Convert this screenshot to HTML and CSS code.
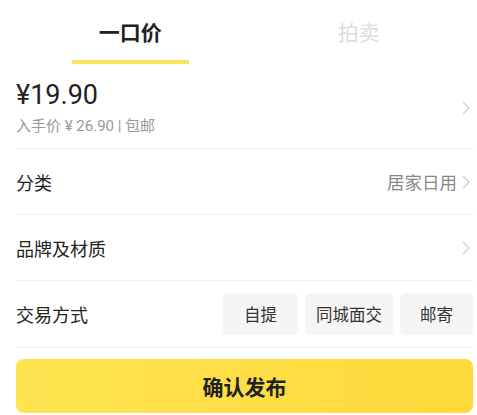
FILE: index.html
```html
<!DOCTYPE html>
<html lang="zh">
<head>
<meta charset="utf-8" />
<title>发布</title>
<link rel="stylesheet" href="styles.css">
</head>
<body>
<div class="page">
  <div class="tabs">
    <div class="tab current">一口价</div>
    <div class="tab">拍卖</div>
  </div>

  <div class="row price-row">
    <div class="price-info">
      <div class="price">¥19.90</div>
      <div class="sub">入手价 ¥ 26.90 | 包邮</div>
    </div>
    <span class="arrow"><svg width="10" height="16" viewBox="0 0 10 16"><path d="M2 2l6 6-6 6" fill="none" stroke="#ccc" stroke-width="1.2"/></svg></span>
  </div>

  <div class="row">
    <span class="label">分类</span>
    <span class="value">居家日用</span>
    <span class="arrow"><svg width="10" height="16" viewBox="0 0 10 16"><path d="M2 2l6 6-6 6" fill="none" stroke="#ccc" stroke-width="1.2"/></svg></span>
  </div>

  <div class="row">
    <span class="label">品牌及材质</span>
    <span class="value"></span>
    <span class="arrow"><svg width="10" height="16" viewBox="0 0 10 16"><path d="M2 2l6 6-6 6" fill="none" stroke="#ccc" stroke-width="1.2"/></svg></span>
  </div>

  <div class="row trade-row">
    <span class="label">交易方式</span>
    <div class="chips">
      <span class="chip w75">自提</span>
      <span class="chip w88">同城面交</span>
      <span class="chip w73">邮寄</span>
    </div>
  </div>

  <div class="btn">确认发布</div>
</div>
</body>
</html>
```

FILE: styles.css
```css
*{ padding:0; margin:0; box-sizing:border-box;}
body{
  background:#fff;
  font-family:"Noto Sans CJK SC","Noto Sans",sans-serif;
  color:#222;
}
.page{ width:477px; padding:0 4px 0 16px;}

.tabs{ display:flex; height:65px;}
.tab{
  flex:1;
  text-align:center;
  font-size:21px;
  line-height:21px;
  padding-top:21px;
  color:#ddd;
  position:relative;
}
.tab.current{ color:#222; font-weight:bold;}
.tab.current:after{
  content:"";
  position:absolute;
  left:56px;
  top:60px;
  width:117px;
  height:4px;
  background:#f9e55a;
}

.row{
  display:flex;
  align-items:center;
  height:66px;
  border-bottom:1px solid #eee;
  font-size:18px;
  color:#222;
}
.row .label{ flex:1;}
.row .value{ color:#888; font-size:17.5px; margin-right:3px;}
.arrow{ width:13px; display:flex; justify-content:flex-end; padding-right:2px;}

.price-row{ height:84px; padding-top:2px;}
.price-info{ flex:1;}
.price{ font-family:"Roboto","Noto Sans",sans-serif; font-size:27px; line-height:30px; color:#222;}
.sub{ font-family:"Roboto","Noto Sans CJK SC",sans-serif; font-size:15px; color:#999; margin-top:7px; line-height:18px;}

.trade-row{ height:67px; border-bottom-color:#f2f2f2;}
.chips{ display:flex; gap:7px;}
.chip{
  height:42px;
  line-height:42px;
  background:#f5f5f5;
  border-radius:5px;
  text-align:center;
  font-size:16.5px;
  color:#333;
}
.w75{ width:75px;}
.w88{ width:88px;}
.w73{ width:73px;}

.btn{
  margin:11px 0 0 0;
  width:457px;
  height:54px;
  line-height:54px;
  border-radius:8px;
  background:linear-gradient(to right,#fee451,#fed93b);
  text-align:center;
  font-size:21px;
  font-weight:bold;
  color:#222;
}
```
